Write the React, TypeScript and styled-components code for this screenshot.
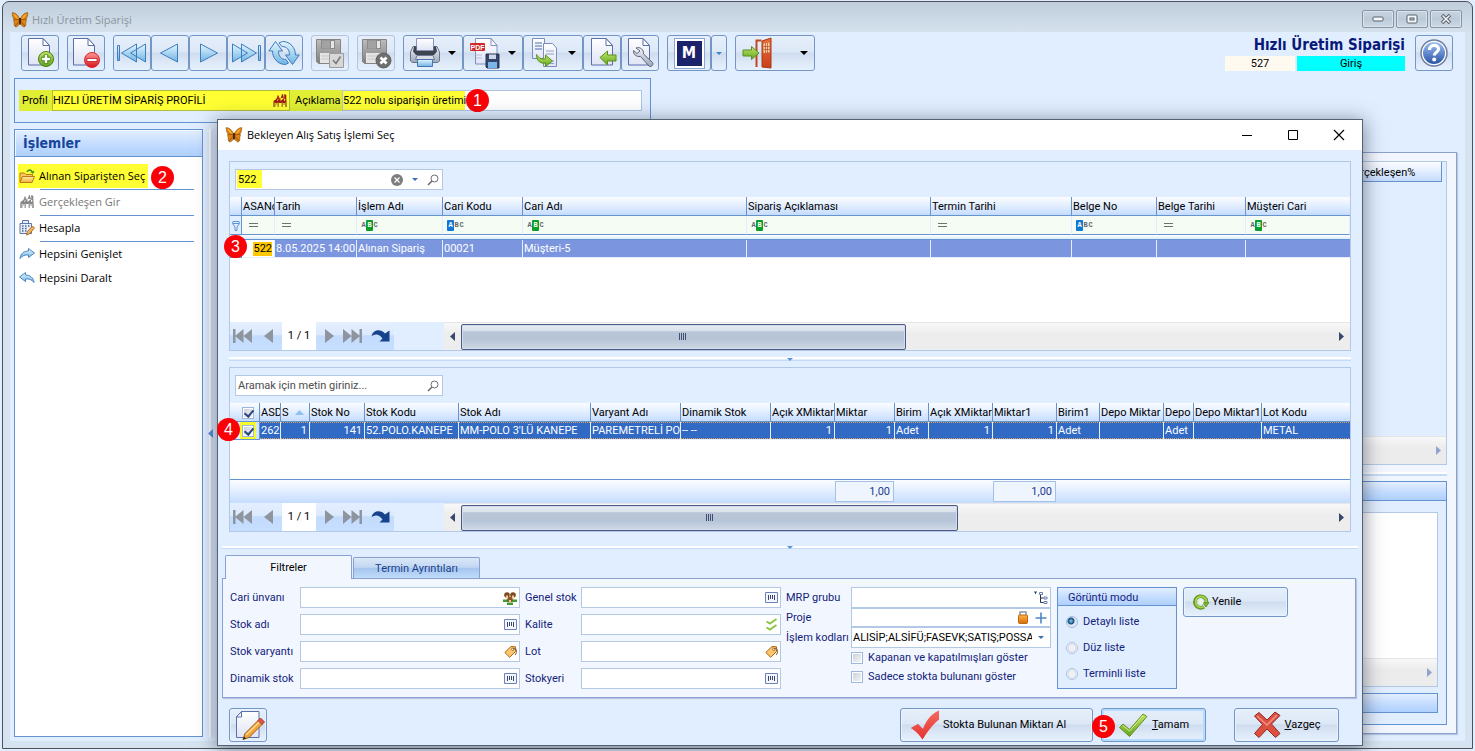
import React from 'react';
import styled, { createGlobalStyle, css } from 'styled-components';

const color = {
  page: '#e1eeff',
  frame: '#d6e3f0',
  line: '#6593cf',
  softLine: '#b3c8e4',
  navy: '#12227c',
  header: 'linear-gradient(#fbfdff, #e4efff 45%, #c5dcff)',
  group: 'linear-gradient(#e3efff, #c4dcff 55%, #aed0fd)',
  button: 'linear-gradient(#e6effb, #dde8f7 46%, #cedcef 50%, #dfeaf8 80%, #e6f1ff)',
};

const tahoma = "Roboto, 'DejaVu Sans Condensed', sans-serif";
const segoe = "'Open Sans', 'Noto Sans', sans-serif";
const heading = "'DejaVu Sans Condensed', 'DejaVu Sans', sans-serif";

const GlobalStyle = createGlobalStyle`
  * { box-sizing: border-box; }
  body { margin: 0; background: ${color.page}; font: 11px/14px ${tahoma}; color: #000; }
  button, input, select { font: inherit; color: inherit; margin: 0; }
  button { padding: 0; cursor: default; }
  svg { display: block; flex: none; overflow: visible; }
`;

/* ---------- window frame ---------- */

const Screen = styled.div`
  display: flex;
  min-height: 100vh;
  padding: 1px 2px 2px;
`;

const Frame = styled.div`
  position: relative;
  flex: 1;
  display: flex;
  flex-direction: column;
  min-width: 0;
  padding: 0 7px 7px;
  border: 1px solid #4d5256;
  border-radius: 7px 7px 0 0;
  background: linear-gradient(#bfcddb, #d5e2ee 30px, ${color.frame} 31px);
`;

const FrameTitle = styled.header`
  display: flex;
  align-items: center;
  gap: 4px;
  height: 30px;
  padding: 5px 3px 0 2px;
  color: #8b949e;
`;

const FrameTitleText = styled.h1`
  flex: 1;
  margin: 0;
  font: 11px/16px ${segoe};
`;

const FrameButtons = styled.div`
  display: flex;
  gap: 2px;
  padding-bottom: 1px;
`;

const FrameButton = styled.button`
  display: grid;
  place-items: center;
  width: 32px;
  height: 18px;
  border: 1px solid #8893a3;
  border-radius: 2px;
  background: linear-gradient(#c9d5e1, #bccad8 50%, #ccd9e5);
  box-shadow: inset 0 0 0 1px #d9e3ec;
`;

const Client = styled.main`
  flex: 1;
  display: flex;
  flex-direction: column;
  background: ${color.page};
`;

/* ---------- toolbar ---------- */

const Toolbar = styled.div`
  display: flex;
  gap: 8px;
  padding: 3px 12px 0 11px;
`;

const ToolGroup = styled.div`
  display: flex;
`;

const ToolButton = styled.button<{ $w?: number; $disabled?: boolean; $split?: boolean }>`
  display: flex;
  align-items: center;
  justify-content: ${(p) => (p.$split ? 'space-between' : 'center')};
  width: ${(p) => p.$w ?? 38}px;
  height: 36px;
  padding: ${(p) => (p.$split ? '0 6px 0 5px' : '0')};
  border: 1px solid ${(p) => (p.$disabled ? '#b3c4dc' : '#7396c6')};
  border-radius: 3px;
  background: ${color.button};
`;

const ToolSpacer = styled.span`
  flex: 1;
`;

const Mark = styled.span`
  display: grid;
  place-items: center;
  width: 31px;
  height: 31px;
  border: 1px solid #8aa6cf;
  background: #1b236b;
  box-shadow: inset 0 0 0 2px #fff;
  color: #fff;
  font: 700 16px/24px ${heading};
`;

const Summary = styled.div`
  display: flex;
  flex-direction: column;
  width: 180px;
  margin-right: 2px;
`;

const SummaryTitle = styled.h2`
  margin: 0;
  text-align: right;
  color: #08197a;
  font: 700 15px/21px ${heading};
`;

const SummaryRow = styled.div`
  display: grid;
  grid-template-columns: 70px 1fr;
  gap: 2px;
  text-align: center;
  line-height: 15px;
`;

const SummaryCell = styled.span<{ $bg: string }>`
  height: 15px;
  background: ${(p) => p.$bg};
  line-height: 16px;
`;

/* ---------- profile strip ---------- */

const ProfileBox = styled.section`
  position: relative;
  display: flex;
  align-items: flex-start;
  align-self: flex-start;
  width: 637px;
  height: 45px;
  margin: 7px 0 6px 4px;
  padding: 11px 4px;
  border: 1px solid ${color.line};
`;

const ProfileLabel = styled.label<{ $w: number }>`
  width: ${(p) => p.$w}px;
  padding-left: ${(p) => (p.$w > 40 ? 5 : 3)}px;
  background: #e0ef33;
  line-height: 21px;
`;

const ProfileField = styled.span<{ $w: number; $partial?: boolean }>`
  display: flex;
  align-items: center;
  width: ${(p) => p.$w}px;
  height: 21px;
  border: 1px solid ${(p) => (p.$partial ? '#aec4e2' : '#b0bd3f')};
  background: ${(p) =>
    p.$partial ? 'linear-gradient(to right, #ffff33 122px, #fff 122px)' : '#ffff33'};
`;

const BareInput = styled.input`
  flex: 1;
  width: 0;
  min-width: 0;
  height: 100%;
  padding: 0;
  border: 0;
  outline: 0;
  background: transparent;
  &::placeholder { color: #4d4d4d; opacity: 1; }
`;

const Badge = styled.span<{ $x: number; $y: number }>`
  position: absolute;
  left: ${(p) => p.$x}px;
  top: ${(p) => p.$y}px;
  z-index: 2;
  width: 23px;
  height: 23px;
  border-radius: 50%;
  background: #fb0007;
  color: #fff;
  text-align: center;
  font: 16px/23px 'Liberation Sans', sans-serif;
`;

/* ---------- workspace behind the dialog ---------- */

const Workspace = styled.div`
  flex: 1;
  display: flex;
  padding: 0 8px 4px 4px;
`;

const Sidebar = styled.aside`
  position: relative;
  width: 189px;
  border: 1px solid ${color.line};
  background: #fff;
`;

const SidebarTitle = styled.h2`
  margin: 0;
  height: 27px;
  padding-left: 8px;
  border-bottom: 1px solid ${color.line};
  background: ${color.group};
  box-shadow: inset 1px 1px 0 #f3f8ff;
  color: #17459c;
  font: 700 14px/26px ${heading};
`;

const ActionList = styled.ul`
  margin: 0;
  padding: 7px 8px 0 3px;
  list-style: none;
`;

const ActionItem = styled.li<{ $ruled?: boolean }>`
  display: flex;
  height: ${(p) => (p.$ruled ? 26 : 24)}px;
  ${(p) =>
    p.$ruled &&
    css`
      background: linear-gradient(${color.line}, ${color.line}) 22px 100% / 100% 1px no-repeat;
    `}
`;

const ActionButton = styled.button<{ $marked?: boolean; $muted?: boolean }>`
  display: flex;
  align-items: center;
  gap: 4px;
  height: 24px;
  padding: 0 3px 0 1px;
  border: 0;
  background: ${(p) => (p.$marked ? '#ffff33' : 'transparent')};
  color: ${(p) => (p.$muted ? '#777' : '#000')};
  font: 11px/16px ${segoe};
  white-space: nowrap;
`;

const SideSplitter = styled.div`
  display: flex;
  align-items: center;
  width: 16px;
  padding-left: 5px;
  background: linear-gradient(to right, transparent 6px, #fff 6px 7px, #cfe0f6 9px 10px, transparent 10px);
`;

const RightPane = styled.section`
  flex: 1;
  display: flex;
  flex-direction: column;
  justify-content: space-between;
  margin: 23px 0 3px;
  padding: 8px 9px 8px 8px;
  border: 1px solid #8ca0d0;
  background: #f2f7ff;
  box-shadow: 1px 1px 1px #b9c8e2;
`;

const BackGrid = styled.div`
  flex: 1;
  display: flex;
  flex-direction: column;
  justify-content: space-between;
  border: 1px solid ${color.softLine};
  background: ${color.page};
`;

const BackHeader = styled.div`
  display: flex;
  justify-content: flex-end;
  height: 20px;
  margin-right: 4px;
  border: solid ${color.line};
  border-width: 0 1px 1px 0;
  background: ${color.header};
  line-height: 21px;
`;

const BackHeaderCell = styled.span`
  width: 94px;
`;

const BackRule = styled.div`
  height: 16px;
  background: linear-gradient(transparent 7px, #fff 7px 9px, #c5dcf8 9px 11px, transparent 11px);
`;

const BackGroup = styled.div`
  flex: none;
  display: flex;
  flex-direction: column;
  height: 244px;
  border: 1px solid ${color.line};
  background: ${color.page};
`;

const BackGroupTitle = styled.div`
  height: 19px;
  border-bottom: 1px solid ${color.line};
  background: ${color.group};
`;

const BackList = styled.div`
  flex: 1;
  display: flex;
  flex-direction: column;
  justify-content: flex-end;
  margin: 11px 8px 6px;
  border: 1px solid ${color.softLine};
  background: #fff;
`;

const BackFooter = styled.div`
  height: 20px;
  margin: 0 8px 11px;
  border: 1px solid ${color.line};
  background: ${color.group};
`;

const BackScroll = styled.div`
  display: flex;
  align-items: center;
  justify-content: flex-end;
  height: 28px;
  padding-right: 5px;
  border-top: 1px solid #e4e4e4;
  background: linear-gradient(#f8f8f8, #ececec 40%);
`;

/* ---------- dialog ---------- */

const Dialog = styled.section`
  position: absolute;
  top: 117px;
  left: 214px;
  right: 109px;
  z-index: 5;
  display: flex;
  flex-direction: column;
  border: 1px solid #56636f;
  background: ${color.page};
  box-shadow: 0 3px 18px 1px rgba(20, 30, 50, 0.5);
`;

const DialogTitle = styled.header`
  display: flex;
  align-items: center;
  height: 30px;
  margin-bottom: 11px;
  padding-left: 8px;
  background: #fff;
`;

const DialogTitleText = styled.h2`
  flex: 1;
  margin: 0;
  padding-left: 5px;
  font: 11px/16px ${segoe};
`;

const CaptionButton = styled.button`
  display: grid;
  place-items: center;
  width: 46px;
  height: 30px;
  border: 0;
  background: transparent;
`;

const GridPanel = styled.section`
  position: relative;
  margin: 0 11px;
  border: 1px solid ${color.softLine};
  background: ${color.page};
`;

const SearchField = styled.div<{ $marked?: boolean }>`
  display: flex;
  align-items: center;
  width: 208px;
  height: 21px;
  margin: 7px 5px;
  padding-left: 2px;
  border: 1px solid ${color.softLine};
  background: #fff;
  ${(p) =>
    p.$marked &&
    css`
      background: linear-gradient(#ffff33, #ffff33) 1px 0 / 25px 18px no-repeat #fff;
    `}
`;

const GlyphButton = styled.button`
  display: grid;
  place-items: center;
  width: 18px;
  height: 18px;
  border: 0;
  background: transparent;
`;

const Table = styled.table`
  width: 100%;
  table-layout: fixed;
  border-collapse: separate;
  border-spacing: 0;
  background: #fff;
`;

const Head = styled.th`
  height: 19px;
  padding: 1px 1px 0;
  border: solid ${color.line};
  border-width: 0 1px 1px 0;
  background: ${color.header};
  font-weight: 400;
  line-height: 17px;
  text-align: left;
  white-space: nowrap;
  overflow: hidden;
  &:last-child { border-right: 0; }
`;

const FilterCell = styled.td`
  height: 19px;
  padding: 0 4px;
  border: solid #e1ecff;
  border-width: 0 1px 0 0;
  border-bottom: 1px solid ${color.line};
  background: #f4fcf4;
  &:first-child { padding: 2px 2px 0; background: ${color.page}; border-right-color: ${color.line}; }
`;

const BandCell = styled.td`
  height: 5px;
  padding: 0;
  border-bottom: 1px solid ${color.line};
  background: linear-gradient(#fff, #dcebff);
`;

const focusDots = 'linear-gradient(to right, #e0a050 50%, #316ac5 50%)';

const Cell = styled.td<{ $tone: 'light' | 'strong' | 'plain'; $right?: boolean }>`
  height: 18px;
  padding: 1px 2px 0 1px;
  border: solid #e6efff;
  border-width: 0 1px 1px 0;
  line-height: 16px;
  text-align: ${(p) => (p.$right ? 'right' : 'left')};
  white-space: nowrap;
  overflow: hidden;
  ${(p) =>
    p.$tone === 'light' &&
    css`
      color: #fff;
      background: #7b96df;
    `}
  ${(p) =>
    p.$tone === 'strong' &&
    css`
      color: #fff;
      background:
        ${focusDots} 0 0 / 2px 1px repeat-x,
        ${focusDots} 0 100% / 2px 1px repeat-x,
        #316ac5;
      background-clip: padding-box;
    `}
  &:last-child { border-right: 0; }
`;

const MarkerCell = styled.td`
  height: 18px;
  padding: 0;
  border: solid ${color.line};
  border-width: 0 1px 1px 0;
  background: linear-gradient(to right, #f6faff, #cfe2ff);
`;

const CheckSpot = styled.span<{ $marked?: boolean }>`
  display: grid;
  place-items: center;
  width: 16px;
  height: 17px;
  margin-left: ${(p) => (p.$marked ? 10 : 9)}px;
  background: ${(p) => (p.$marked ? '#f5fb2e' : 'transparent')};
`;

const Hit = styled.mark`
  display: inline-block;
  height: 14px;
  background: #ffc800;
  line-height: 14px;
`;

const EmptyCell = styled.td<{ $h: number }>`
  height: ${(p) => p.$h}px;
  padding: 0;
`;

const FootCell = styled.td`
  height: 24px;
  padding: 1px 1px 1px 0;
  border-top: 1px solid ${color.line};
  background: ${color.header};
`;

const Total = styled.output`
  display: block;
  height: 21px;
  padding-right: 3px;
  border: 1px solid #a5c2e6;
  background: #eef5ff;
  color: #1d3c8f;
  line-height: 20px;
  text-align: right;
`;

const SortLabel = styled.span`
  display: flex;
  align-items: center;
  gap: 6px;
`;

const ABC = styled.span<{ $mode: 'contains' | 'starts' }>`
  display: flex;
  align-items: center;
  width: 17px;
  color: #666;
  font: 700 7px/11px 'Liberation Mono', monospace;
  text-align: center;
  span { flex: 1; }
  span:nth-child(${(p) => (p.$mode === 'contains' ? 2 : 1)}) {
    flex: 0 0 7px;
    border-radius: 1px;
    background: ${(p) => (p.$mode === 'contains' ? '#0a9e28' : '#0f78d4')};
    color: #fff;
  }
`;

/* ---------- record navigator + scroll bar ---------- */

const NavBar = styled.div`
  display: flex;
  height: 28px;
`;

const NavButtons = styled.div<{ $back?: boolean }>`
  display: flex;
  align-items: center;
  justify-content: space-between;
  width: ${(p) => (p.$back ? 52 : 78)}px;
  padding: ${(p) => (p.$back ? '0 9px 0 3px' : '0 3px 0 9px')};
  background: linear-gradient(#e4efff, #dceaff 44%, #c3dbfc 50%, #c6deff);
`;

const NavButton = styled.button`
  border: 0;
  background: transparent;
`;

const NavCount = styled.span`
  width: 34px;
  background: #fff;
  line-height: 28px;
  text-align: center;
`;

const ScrollBar = styled.div`
  flex: 1;
  display: flex;
  align-items: center;
  margin-left: 50px;
  border-top: 1px solid #e6e6e6;
  background: linear-gradient(#f8f8f8, #ededed 40%);
`;

const ScrollArrow = styled.button`
  display: grid;
  place-items: center;
  width: 17px;
  height: 26px;
  border: 0;
  background: transparent;
`;

const Track = styled.div`
  flex: 1;
`;

const Thumb = styled.div<{ $size: number }>`
  display: grid;
  place-items: center;
  width: ${(p) => p.$size}%;
  height: 26px;
  border: 1px solid #4b5b86;
  border-radius: 2px;
  background: linear-gradient(#e6ebf1, #dae2eb 24%, #b9c6d8 28%, #b6c4d7 60%, #cfd9e6);
  box-shadow: inset 0 0 0 1px #d3dce8;
`;

const Splitter = styled.div<{ $wide?: boolean }>`
  display: flex;
  justify-content: center;
  align-items: center;
  height: ${(p) => (p.$wide ? 23 : 16)}px;
  margin: ${(p) => (p.$wide ? '0 4px' : '0 11px')};
  padding-top: ${(p) => (p.$wide ? 7 : 0)}px;
  background: ${(p) =>
    p.$wide
      ? 'linear-gradient(transparent 14px, #fff 14px 16px, #c5dcf8 16px 17px, transparent 17px)'
      : 'linear-gradient(transparent 6px, #fff 6px 8px, #c5dcf8 9px 10px, transparent 10px)'};
`;

/* ---------- filter tabs ---------- */

const Tabs = styled.div`
  display: flex;
  align-items: flex-end;
  gap: 1px;
  padding: 0 7px;
`;

const Tab = styled.button<{ $active?: boolean }>`
  z-index: ${(p) => (p.$active ? 1 : 0)};
  width: 127px;
  height: ${(p) => (p.$active ? 24 : 21)}px;
  margin-bottom: ${(p) => (p.$active ? -1 : 0)}px;
  padding-top: 1px;
  border: 1px solid #8ca0d0;
  border-bottom: 0;
  border-radius: 2px 2px 0 0;
  background: ${(p) =>
    p.$active ? '#f2f7ff' : 'linear-gradient(#dbe8f8, #c2d7f2 46%, #a7c6ee 52%, #c0dcfb)'};
  color: ${(p) => (p.$active ? '#000' : '#1b3f8c')};
  line-height: 18px;
`;

const TabPanel = styled.div`
  display: flex;
  align-items: flex-start;
  gap: 6px;
  margin: 0 6px 0 4px;
  padding: 8px 7px;
  border: 1px solid #8ca0d0;
  background: #f2f7ff;
  box-shadow: 1px 1px 1px #b5c4df;
  color: ${color.navy};
`;

const FieldColumns = styled.div`
  display: flex;
  align-items: flex-start;
  gap: 5px;
`;

const Fields = styled.div<{ $label: number; $input: number; $tight?: boolean }>`
  display: grid;
  grid-template-columns: ${(p) => p.$label}px ${(p) => p.$input}px;
  align-items: center;
  row-gap: ${(p) => (p.$tight ? 0 : 6)}px;
`;

const FieldLabel = styled.label`
  line-height: 19px;
  white-space: nowrap;
`;

const Field = styled.span<{ $flat?: boolean }>`
  display: flex;
  align-items: center;
  height: ${(p) => (p.$flat ? 19 : 21)}px;
  border: 1px solid ${color.softLine};
  background: #fff;
  color: #000;
`;

const CodeSelect = styled.select`
  flex: 1;
  min-width: 0;
  height: 19px;
  padding: 0 0 0 1px;
  border: 0;
  outline: 0;
  appearance: none;
  background: transparent;
`;

const Checks = styled.div`
  display: flex;
  flex-direction: column;
  grid-column: 2;
`;

const CheckLabel = styled.label`
  display: flex;
  align-items: center;
  gap: 5px;
  height: 19px;
  white-space: nowrap;
`;

const CheckBox = styled.input.attrs({ type: 'checkbox' })`
  position: relative;
  flex: none;
  appearance: none;
  width: 12px;
  height: 12px;
  border: 1px solid #9db8da;
  background: linear-gradient(135deg, #c9cfd8, #f7f8fa);
  box-shadow: inset 0 0 0 1px #fff;
  &:checked::after {
    content: '';
    position: absolute;
    left: 3px;
    top: 0;
    width: 4px;
    height: 7px;
    border: solid #2d4680;
    border-width: 0 2px 2px 0;
    transform: rotate(40deg);
  }
`;

const ModeGroup = styled.fieldset`
  width: 120px;
  height: 102px;
  min-width: 0;
  margin: 0;
  padding: 0;
  border: 1px solid ${color.line};
  background: ${color.page};
`;

const ModeTitle = styled.legend`
  float: left;
  width: 100%;
  height: 18px;
  padding: 0 10px;
  border-bottom: 1px solid ${color.line};
  background: ${color.group};
  line-height: 19px;
`;

const ModeList = styled.div`
  clear: both;
  padding: 3px 0 0 8px;
`;

const ModeLabel = styled.label`
  display: flex;
  align-items: center;
  gap: 5px;
  height: 26px;
`;

const Radio = styled.input.attrs({ type: 'radio' })`
  appearance: none;
  width: 12px;
  height: 12px;
  border: 1px solid #a9c0de;
  border-radius: 50%;
  background: radial-gradient(circle, #eef1f5 3px, #d3dae4 4px, #fff 5px);
  &:checked {
    border-color: #9dbadb;
    background: radial-gradient(circle at 4px 4px, #7fd0ee 0, #174a7c 3px, #dfeaf5 4px);
  }
`;

const PushButton = styled.button<{ $w: number; $h: number; $default?: boolean }>`
  position: relative;
  display: flex;
  align-items: center;
  justify-content: center;
  gap: 4px;
  width: ${(p) => p.$w}px;
  height: ${(p) => p.$h}px;
  border: 1px solid #7396c6;
  border-radius: 3px;
  background: ${color.button};
  box-shadow: ${(p) => (p.$default ? 'inset 0 0 0 2px #b5dcff' : 'inset 0 0 0 1px #eaf2fd')};
  color: #000;
`;

const LeadButton = styled(PushButton)`
  justify-content: flex-start;
  padding-left: 9px;
  gap: 3px;
`;

const DialogFooter = styled.footer`
  display: flex;
  gap: 8px;
  padding: 10px 23px 3px 11px;
`;

const Gap = styled.span<{ $w?: number }>`
  ${(p) => (p.$w ? `width: ${p.$w}px;` : 'flex: 1;')}
`;

/* ---------- drawings ---------- */

const DefsSheet = styled.svg`
  position: absolute;
`;

const Gradients = () => (
  <DefsSheet width="0" height="0" aria-hidden="true">
    <defs>
      {[
        ['paper', '#ffffff', '#dfe4f5'],
        ['green', '#c4e66a', '#5fa51e'],
        ['red', '#ff9a94', '#d8131c'],
        ['sky', '#e3f6ff', '#6fb4e3'],
        ['blue', '#9cc0f2', '#2a55a8'],
        ['grey', '#bdbdbd', '#7e7e7e'],
        ['steel', '#f2f4f8', '#9ba6b8'],
        ['orange', '#ffb545', '#d96a0c'],
        ['door', '#ee6a3a', '#c8401a'],
        ['folder', '#ffe9a0', '#f0b23a'],
      ].map(([id, a, b]) => (
        <linearGradient key={id} id={id} x1="0" y1="0" x2="0" y2="1">
          <stop offset="0" stopColor={a} />
          <stop offset="1" stopColor={b} />
        </linearGradient>
      ))}
    </defs>
  </DefsSheet>
);

const Icon = ({ s = 32, box = 32, children }: { s?: number; box?: number; children: React.ReactNode }) => (
  <svg width={s} height={s} viewBox={`0 0 ${box} ${box}`} fill="none" aria-hidden="true">
    {children}
  </svg>
);

const Wing = () => (
  <g>
    <path d="M8 7.500C6 3 3.500.8.3.6.1 3 .8 5.500 2 7 1.300 8 1.600 9.300 2.300 10 1.800 12 2.300 14.500 3.800 15c2.200-.2 3.700-3 4.200-6z" fill="#e2820f" stroke="#8a4a08" strokeWidth=".6" />
    <path d="M1.500 1.800C3.500 2.500 5.200 4.500 6 7 4.500 6.300 2.500 5 1.500 1.800z" fill="#ffb53a" />
    <path d="M2 7c2 .5 3.500.5 5.500 1M3 14c1-1 3-3.500 4.500-5" stroke="#7a3f06" strokeWidth=".7" />
  </g>
);

const Butterfly = () => (
  <Icon s={16} box={16}>
    <Wing />
    <g transform="translate(16 0) scale(-1 1)"><Wing /></g>
    <path d="M8 6v6.500" stroke="#3a2410" strokeWidth="1.800" />
  </Icon>
);

const Page = ({ x = 4, y = 1 }: { x?: number; y?: number }) => (
  <g transform={`translate(${x} ${y})`}>
    <path d="M.5.5h14.500l6.500 7v19.500H.5z" fill="url(#paper)" stroke="#5a6ea8" />
    <path d="M15 .5v7h6.500z" fill="#fff" stroke="#5a6ea8" strokeLinejoin="round" />
  </g>
);

const PageAdd = () => (
  <Icon>
    <Page />
    <circle cx="22" cy="22" r="7.500" fill="url(#green)" stroke="#4a7d17" />
    <path d="M22 17.500v9M17.500 22h9" stroke="#3f7a12" strokeWidth="4.500" />
    <path d="M22 18v8M18 22h8" stroke="#fff" strokeWidth="2.500" />
  </Icon>
);

const PageRemove = () => (
  <Icon>
    <Page x={3} />
    <circle cx="22" cy="23" r="7.500" fill="url(#red)" stroke="#e0262d" />
    <path d="M17 21.500h10v3H17z" fill="#fff" stroke="#b01018" strokeWidth=".7" />
  </Icon>
);

const skyStroke = { fill: 'url(#sky)', stroke: '#3d7cbd', strokeWidth: 1, strokeLinejoin: 'round' as const };

const First = ({ flip }: { flip?: boolean }) => (
  <Icon>
    <g transform={flip ? 'translate(32 0) scale(-1 1)' : undefined}>
      <path d="M1.500 8.500h2v15h-2z" {...skyStroke} />
      <path d="M20.500 7v18L5.500 16zM29.500 7v18l-15-9z" {...skyStroke} />
    </g>
  </Icon>
);

const Prev = ({ flip }: { flip?: boolean }) => (
  <Icon>
    <path d={flip ? 'M8.500 7v18l17-9z' : 'M23.500 7v18l-17-9z'} {...skyStroke} />
  </Icon>
);

const Reload = () => (
  <Icon>
    <path d="M7.500 4.500.8 14h3.700C4.500 21 9.500 27.500 17.500 27.500l3-1.500-2.500-3.500C13 22.500 10.500 19 10.500 14h4z" {...skyStroke} />
    <path d="M24.500 27.500 31.200 18h-3.700C27.500 11 22.500 4.500 14.500 4.500L11 6l3 3.500C19 9.500 21.500 13 21.500 18h-4z" {...skyStroke} />
  </Icon>
);

const Floppy = () => (
  <g>
    <path d="M2.500 2.500h24v24h-22l-2-2z" fill="url(#grey)" stroke="#858585" />
    <path d="M7 3h14v9H7z" fill="#8b8b8b" />
    <path d="M8 3.500h8v8H8z" fill="#a2a2a2" />
    <path d="M17 4h3v7h-3z" fill="#e6e6e6" />
    <path d="M6 16h17v10H6z" fill="#e4e4e4" />
    <path d="M7.500 19h14M7.500 22h14" stroke="#c6c6c6" />
  </g>
);

const SaveCheck = () => (
  <Icon>
    <Floppy />
    <path d="M15.500 16.500h14v14h-14z" fill="#d7d7d7" stroke="#9c9c9c" />
    <path d="m19 23 3 3.500 4.500-7" stroke="#777" strokeWidth="1.500" />
  </Icon>
);

const SaveCancel = () => (
  <Icon>
    <Floppy />
    <circle cx="23.500" cy="23.500" r="7.500" fill="#6f6f6f" stroke="#5f5f5f" />
    <path d="m20.500 20.500 6 6m0-6-6 6" stroke="#fff" strokeWidth="2.800" />
  </Icon>
);

const Printer = () => (
  <Icon>
    <path d="M7.500 1.500h17v12h-17z" fill="url(#paper)" stroke="#8a93b5" />
    <path d="M4 9.500h3.500v5h17v-5H28l2.500 5.500v9l-2 1.500h-25L1.500 24v-9z" fill="url(#steel)" stroke="#66708f" />
    <path d="M5 9.500h2v4.500h18V9.500h2l1 5-3 3.500H7l-3-3.500z" fill="#3e4350" />
    <path d="M8 18.500h16l1.500 4H6.500z" fill="#d8dde6" stroke="#6d7896" />
    <path d="M8.500 22.500h15v7h-15z" fill="url(#sky)" stroke="#4b73ad" />
  </Icon>
);

const PdfSave = () => (
  <Icon>
    <path d="M6.500 1.500h15.500l6 7v18.500H6.500z" fill="url(#paper)" stroke="#8290bd" />
    <path d="M22 1.500v7h6z" fill="#fff" stroke="#8290bd" />
    <rect x="1" y="6" width="15" height="8" rx="1" fill="#cf2a27" />
    <text x="8.500" y="12.500" fontSize="7" fontWeight="700" fill="#fff" textAnchor="middle" fontFamily="Liberation Sans, sans-serif">PDF</text>
    <path d="M7 18h6M7 21h6" stroke="#b8c0da" />
    <path d="M17 17h13v14H18l-1-1z" fill="#33456b" stroke="#26334f" />
    <path d="M20 17.500h7v4.500h-7z" fill="#cfd8ea" />
    <path d="M19 25h9v6h-9z" fill="#79b7e8" />
  </Icon>
);

const PageTransfer = () => (
  <Icon>
    <path d="M3.500 1.500h12v20h-12z" fill="url(#paper)" stroke="#7d8cba" />
    <path d="M6 6h7M6 9h7M6 12h7" stroke="#4d6bb0" />
    <path d="M14.500 6.500h9l4 4.500v18.500h-13z" fill="url(#paper)" stroke="#7d8cba" />
    <path d="M17 14h8M17 17h8M17 24h8M17 26.500h8" stroke="#8f9ecb" />
    <path d="M7.500 17.500c2 4 6 5 9 4V18l7 6-7 5.500V26c-5 1-9-2-9-8.500z" fill="url(#green)" stroke="#5b8f1e" />
  </Icon>
);

const PageImport = () => (
  <Icon>
    <Page x={5} />
    <path d="M14 20.500 21.500 14v4H30v6h-8.500v4z" fill="url(#green)" stroke="#5b8f1e" />
  </Icon>
);

const PageTools = () => (
  <Icon>
    <Page x={4} />
    <path d="M12 11c4-1.500 8 1.500 7.500 6l9 8.500c1.500 2-1 5-3.500 3.500l-8.500-9.500C12 20 9 17 9.500 13.500l3.500 3 3-2.500z" fill="url(#steel)" stroke="#5a6478" />
  </Icon>
);

const ExitDoor = () => (
  <Icon>
    <path d="M15.500 30V3.500h5" stroke="#c2481f" strokeWidth="2" />
    <path d="M21 4 30 1v30l-9-1z" fill="url(#door)" stroke="#a53b15" />
    <path d="M22.500 6.500 28.500 5.500v10l-6 .5z" fill="#f6cfa5" />
    <path d="M24.500 6v10M26.500 6v10M22.500 9.500h6M22.500 12.500h6" stroke="#b5491e" strokeWidth=".7" />
    <path d="M2 13h8.500V9.500L18 16l-7.500 6.500V19H2z" fill="url(#green)" stroke="#5b8f1e" />
  </Icon>
);

const Help = () => (
  <Icon>
    <circle cx="16" cy="16" r="13" fill="#fff" stroke="#6d7e9e" strokeWidth="1.500" />
    <circle cx="16" cy="16" r="11" fill="url(#blue)" />
    <path d="M11.500 13c0-6 9-6 9-1 0 3.500-4 3-4.200 6.500" stroke="#fff" strokeWidth="3.200" />
    <circle cx="16.200" cy="22.500" r="2" fill="#fff" />
  </Icon>
);

const Caret = ({ w = 8, c = '#000' }: { w?: number; c?: string }) => (
  <svg width={w} height={w / 2} viewBox="0 0 8 4" aria-hidden="true">
    <path d="M0 0h8L4 4z" fill={c} />
  </svg>
);

const Factory = ({ dark, light }: { dark: string; light: string }) => (
  <Icon s={16} box={16}>
    <path d="M4.500 7 6 2.500 7.500 6M9 5l1.500-4 1 4M12.500 6V1.500l1.500.5V7" fill={dark} stroke={dark} strokeWidth=".6" />
    <path d="M1.500 10V8L5 5.500V8l3.500-3v3L12 5v3l2.500-1.500V10z" fill={dark} />
    <path d="M1 9.500h2.500V14H1zM5.500 9.500H7V14H5.500zM9.500 9.500H11V14H9.500zM13 9.500h2V14h-2z" fill={light} />
    <path d="M3.500 10h2v2h-2zM11 10h2v2h-2z" fill={light} opacity=".6" />
  </Icon>
);

const FolderOpen = () => (
  <Icon s={16} box={16}>
    <path d="M1 14V5h4.500L7 6.500h6.500V9" fill="#f6c75a" stroke="#b97a17" />
    <path d="M1 14.500 3.500 8.500h12l-2.500 6z" fill="url(#folder)" stroke="#b97a17" />
    <path d="M8 4C9 1.500 12 1.500 13 3.500" stroke="#3f8f2b" strokeWidth="1.500" />
    <path d="m11 3.500 4.500-.5L14 6z" fill="#3f8f2b" />
  </Icon>
);

const Calculator = () => (
  <Icon s={16} box={16}>
    <path d="M3.500.5h6v3h-6zM1 3.500h11.500v10H1z" fill="#e9eef8" stroke="#5d75a8" />
    <path d="M3 6h1.500M6 6h1.500M9 6h1.500M3 8.500h1.500M6 8.500h1.500M3 11h1.500M6 11h1.500" stroke="#43609c" strokeWidth="1.500" />
    <path d="m7.500 15 1-3.500L13.500 6l2 2-5 6z" fill="#f3b35a" stroke="#99601d" strokeWidth=".8" />
  </Icon>
);

const BendArrow = ({ flip }: { flip?: boolean }) => (
  <Icon s={16} box={16}>
    <path
      transform={flip ? 'translate(16 0) scale(-1 1)' : undefined}
      d="M1 12.500C1.500 7.500 5 5 9.500 5V2.500L15.500 7 9.500 11.500V9C6 8.500 3.500 9.500 1 12.500z"
      {...skyStroke}
      strokeWidth=".9"
    />
  </Icon>
);

const Clear = () => (
  <Icon s={12} box={12}>
    <circle cx="6" cy="6" r="6" fill="#7d7d7d" />
    <path d="m3.500 3.500 5 5m0-5-5 5" stroke="#fff" strokeWidth="1.200" />
  </Icon>
);

const Magnifier = () => (
  <Icon s={12} box={12}>
    <circle cx="7.500" cy="4.500" r="3.500" stroke="#6d6d6d" />
    <path d="M5 7 1 11" stroke="#6d6d6d" strokeWidth="1.600" />
  </Icon>
);

const Funnel = () => (
  <svg width="8" height="10" viewBox="0 0 8 10" fill="none" aria-label="Filtre">
    <path d="M.5 2.500 1 .5h6l.5 2L5 6v3.500H3V6zM1 2.500h6" stroke="#5b94dc" />
  </svg>
);

const EqualSign = () => (
  <svg width="17" height="6" viewBox="0 0 17 6" fill="none" aria-label="Eşittir">
    <path d="M3 1.500h9M3 4.500h9" stroke="#707070" />
  </svg>
);

const Barcode = () => (
  <svg width="13" height="11" viewBox="0 0 13 11" fill="none" aria-hidden="true">
    <path d="M.5.500h12v10H.5z" fill="#f3f6fd" stroke="#6c82ba" />
    <path d="M3.500 3v5M5.500 3v4M7.500 3v4M9.500 3v5" stroke="#3c4668" />
  </svg>
);

const People = () => (
  <Icon s={14} box={14}>
    <path d="M0 8.500h6V11H0zM8 8.500h6V11H8zM4 11.500h6V14H4z" fill="#3d9a35" />
    <circle cx="4" cy="4" r="2.800" fill="#7c4a1e" />
    <circle cx="10" cy="4" r="2.800" fill="#7c4a1e" />
    <circle cx="7" cy="8.500" r="2.800" fill="#8b5524" />
    <path d="M3 4.500h2v3H3zM9 4.500h2v3H9zM6 9h2v2.500H6z" fill="#f0c896" />
  </Icon>
);

const TagIcon = () => (
  <Icon s={13} box={13}>
    <path d="M.8 7.500 7 1.500l4.500.3.2 4.500-6 6z" fill="#ffc56b" stroke="#a8691c" />
    <circle cx="8.800" cy="4.300" r="1.200" fill="#fff" stroke="#7b4c12" strokeWidth=".7" />
    <path d="M9 4c4-2 4.500 4 2 6" stroke="#6b4a26" strokeWidth=".9" />
  </Icon>
);

const DoubleCheck = () => (
  <Icon s={13} box={13}>
    <path d="m1.500 3.500 3.500 2L11.500 1M1.500 9.500l3.500 2 6.500-4.500" stroke="#8cc540" strokeWidth="2" />
  </Icon>
);

const TreeIcon = () => (
  <Icon s={14} box={14}>
    <path d="M0 1h3M1.500 1v2" stroke="#39466e" />
    <path d="M5.500 1.500h3v2h-3zM10 6h3v2h-3zM10 10.500h3v2h-3z" fill="#fff" stroke="#6c7fb2" />
    <path d="M6.500 4v7.500h3M6.500 7h3" stroke="#27324f" />
  </Icon>
);

const LockIcon = () => (
  <svg width="10" height="13" viewBox="0 0 10 13" fill="none" aria-hidden="true">
    <path d="M2 5V1h6v4" stroke="#8a94a6" strokeWidth="1.500" />
    <rect x=".5" y="4" width="9" height="8.500" rx="1" fill="url(#orange)" stroke="#b96c10" />
  </svg>
);

const PlusIcon = () => (
  <Icon s={12} box={12}>
    <path d="M6 .5v11M.5 6h11" stroke="#4b86c4" strokeWidth="1.600" />
  </Icon>
);

const Regenerate = () => (
  <Icon s={16} box={16}>
    <path d="M11 12.800A5.800 5.800 0 1 1 13.500 8" stroke="#5d9420" strokeWidth="3.600" />
    <path d="M11 12.500A5.500 5.500 0 1 1 13.500 8" stroke="#a5d14d" strokeWidth="2" />
    <path d="M9.500 8.500h6.500L13 13z" fill="#7cb52d" stroke="#4e8518" strokeWidth=".7" />
    <circle cx="8" cy="8" r="2.500" fill="#eef6e0" />
  </Icon>
);

const RedCheck = () => (
  <Icon s={30} box={30}>
    <path d="M1 18 8 14l5 5C16 11 21 4 29 .5v9C23 14 17 22 12.500 29.500 10 25 5 20.500 1 18z" fill="url(#red)" />
    <path d="M1 18 8 14l5 5C16 11 21 4 29 .5v9C23 14 17 22 12.500 29.500 10 25 5 20.500 1 18z" fill="#ec4a3c" opacity=".6" />
  </Icon>
);

const GreenCheck = () => (
  <Icon s={30} box={30}>
    <path d="M1.500 17.500 5 14l6.500 5.500L25 4l4 2.500L11.500 26.500z" fill="url(#green)" stroke="#6b8f1d" />
    <path d="M5 15.500 11.500 21 25 5.500" stroke="#d8f08c" strokeWidth="1" />
  </Icon>
);

const RedCross = () => (
  <Icon s={28} box={28}>
    <path d="M1.500 5 6 1.500 14 9l8-8L27 4.500 18.500 13 27 22.500 22.500 26.500 14 18 6 26.500 1.500 22.500 9.500 13.500z" fill="#dd4f3e" stroke="#8e2b22" />
    <path d="M4 5 14 14 24 4" stroke="#f0938a" strokeWidth="1.500" />
  </Icon>
);

const PageEdit = () => (
  <Icon>
    <path d="M9.500 2.500h17.500v26H4.500V8z" fill="url(#paper)" stroke="#5a6ea8" strokeLinejoin="round" />
    <path d="M9.500 2.500V8h-5z" fill="#fff" stroke="#5a6ea8" strokeLinejoin="round" />
    <path d="M11 30.500l2-6L26.500 11l4 4L17 28.500z" fill="#f2a33c" stroke="#9c5d14" />
    <path d="M14 26 28 12.500" stroke="#ffd98f" strokeWidth="1.500" />
    <path d="m26 11.500 2.500-2.500 4 4-2.500 2.500z" fill="#e0564c" stroke="#a93932" />
    <path d="m11 30.500 1-3 2 2z" fill="#222" />
  </Icon>
);

const NavEnd = ({ flip }: { flip?: boolean }) => (
  <svg width="19" height="14" viewBox="0 0 19 14" aria-hidden="true">
    <path
      transform={flip ? 'translate(19 0) scale(-1 1)' : undefined}
      d="M0 0h2.500v14H0zM10.500 0v14L2 7zM19 0v14l-8.500-7z"
      fill="#8e959e"
    />
  </svg>
);

const NavStep = ({ flip }: { flip?: boolean }) => (
  <svg width="9" height="14" viewBox="0 0 9 14" aria-hidden="true">
    <path d={flip ? 'M0 0v14l9-7z' : 'M9 0v14L0 7z'} fill="#8e959e" />
  </svg>
);

const NavRedo = () => (
  <svg width="20" height="14" viewBox="0 0 20 14" aria-hidden="true">
    <path d="M.5 7C2 .5 9.500-.5 14 4.500l4.500-3V12.500H8.500L11.500 9.500C8.500 5 4.500 4.500.5 7z" fill="#17438c" />
  </svg>
);

const SideArrow = ({ flip, c = '#39476e' }: { flip?: boolean; c?: string }) => (
  <svg width="5" height="9" viewBox="0 0 5 9" aria-hidden="true">
    <path d={flip ? 'M0 0v9l5-4.500z' : 'M5 0v9L0 4.500z'} fill={c} />
  </svg>
);

const Grip = () => (
  <svg width="8" height="7" viewBox="0 0 8 7" aria-hidden="true">
    <path d="M.5 0v7M2.500 0v7M4.500 0v7M6.500 0v7" stroke="#3f4d72" />
  </svg>
);

/* ---------- composed parts ---------- */

const RecordBar = ({ thumb }: { thumb: number }) => (
  <NavBar>
    <NavButtons $back>
      <NavButton aria-label="İlk kayıt"><NavEnd /></NavButton>
      <NavButton aria-label="Önceki kayıt"><NavStep /></NavButton>
    </NavButtons>
    <NavCount>1 / 1</NavCount>
    <NavButtons>
      <NavButton aria-label="Sonraki kayıt"><NavStep flip /></NavButton>
      <NavButton aria-label="Son kayıt"><NavEnd flip /></NavButton>
      <NavButton aria-label="Yenile"><NavRedo /></NavButton>
    </NavButtons>
    <ScrollBar>
      <ScrollArrow aria-label="Sola kaydır"><SideArrow /></ScrollArrow>
      <Track><Thumb $size={thumb}><Grip /></Thumb></Track>
      <ScrollArrow aria-label="Sağa kaydır"><SideArrow flip /></ScrollArrow>
    </ScrollBar>
  </NavBar>
);

type OrderColumn = { title: string; w?: number; filter: 'eq' | 'contains' | 'starts'; value: string };

const orderColumns: OrderColumn[] = [
  { title: 'ASANo', w: 33, filter: 'eq', value: '522' },
  { title: 'Tarih', w: 82, filter: 'eq', value: '8.05.2025 14:00' },
  { title: 'İşlem Adı', w: 86, filter: 'contains', value: 'Alınan Sipariş' },
  { title: 'Cari Kodu', w: 80, filter: 'starts', value: '00021' },
  { title: 'Cari Adı', w: 224, filter: 'contains', value: 'Müşteri-5' },
  { title: 'Sipariş Açıklaması', w: 184, filter: 'contains', value: '' },
  { title: 'Termin Tarihi', w: 141, filter: 'eq', value: '' },
  { title: 'Belge No', w: 85, filter: 'starts', value: '' },
  { title: 'Belge Tarihi', w: 89, filter: 'eq', value: '' },
  { title: 'Müşteri Cari', filter: 'contains', value: '' },
];

type LineColumn = { title: string; w?: number; value: string; right?: boolean; total?: string };

const lineColumns: LineColumn[] = [
  { title: 'ASD', w: 21, value: '262' },
  { title: 'S', w: 29, value: '1', right: true },
  { title: 'Stok No', w: 55, value: '141', right: true },
  { title: 'Stok Kodu', w: 94, value: '52.POLO.KANEPE' },
  { title: 'Stok Adı', w: 132, value: "MM-POLO 3'LÜ KANEPE" },
  { title: 'Varyant Adı', w: 90, value: 'PAREMETRELİ PO' },
  { title: 'Dinamik Stok', w: 90, value: '-- --' },
  { title: 'Açık XMiktar', w: 64, value: '1', right: true },
  { title: 'Miktar', w: 60, value: '1', right: true, total: '1,00' },
  { title: 'Birim', w: 34, value: 'Adet' },
  { title: 'Açık XMiktar1', w: 64, value: '1', right: true },
  { title: 'Miktar1', w: 64, value: '1', right: true, total: '1,00' },
  { title: 'Birim1', w: 43, value: 'Adet' },
  { title: 'Depo Miktar', w: 64, value: '' },
  { title: 'Depo', w: 30, value: 'Adet' },
  { title: 'Depo Miktar1', w: 68, value: '' },
  { title: 'Lot Kodu', value: 'METAL' },
];

const FilterMark = ({ kind }: { kind: OrderColumn['filter'] }) =>
  kind === 'eq' ? (
    <EqualSign />
  ) : (
    <ABC $mode={kind}><span>A</span><span>B</span><span>C</span></ABC>
  );

const OrdersPanel = () => (
  <GridPanel>
    <SearchField $marked>
      <BareInput aria-label="Ara" defaultValue="522" />
      <GlyphButton aria-label="Temizle"><Clear /></GlyphButton>
      <GlyphButton aria-label="Geçmiş"><Caret w={6} c="#3c6fae" /></GlyphButton>
      <GlyphButton aria-label="Bul"><Magnifier /></GlyphButton>
    </SearchField>
    <Table>
      <colgroup>
        <col width={12} />
        {orderColumns.map((c) => <col key={c.title} width={c.w} />)}
      </colgroup>
      <thead>
        <tr>
          <Head aria-label="Gösterge" />
          {orderColumns.map((c) => <Head key={c.title}>{c.title}</Head>)}
        </tr>
      </thead>
      <tbody>
        <tr>
          <FilterCell><Funnel /></FilterCell>
          {orderColumns.map((c) => (
            <FilterCell key={c.title}><FilterMark kind={c.filter} /></FilterCell>
          ))}
        </tr>
        <tr><BandCell colSpan={11} /></tr>
        <tr>
          <MarkerCell />
          {orderColumns.map((c, i) => (
            <Cell key={c.title} $tone={i ? 'light' : 'plain'} $right={!i}>
              {i ? c.value : <Hit>{c.value}</Hit>}
            </Cell>
          ))}
        </tr>
        <tr><EmptyCell colSpan={11} $h={64} /></tr>
      </tbody>
    </Table>
    <RecordBar thumb={51} />
    <Badge $x={-6} $y={73}>3</Badge>
  </GridPanel>
);

const LinesPanel = () => (
  <GridPanel>
    <SearchField>
      <BareInput aria-label="Ara" placeholder="Aramak için metin giriniz..." />
      <GlyphButton aria-label="Bul"><Magnifier /></GlyphButton>
    </SearchField>
    <Table>
      <colgroup>
        <col width={30} />
        {lineColumns.map((c) => <col key={c.title} width={c.w} />)}
      </colgroup>
      <thead>
        <tr>
          <Head><CheckSpot><CheckBox defaultChecked aria-label="Tümünü seç" /></CheckSpot></Head>
          {lineColumns.map((c) => (
            <Head key={c.title}>
              {c.title === 'S' ? (
                <SortLabel>
                  S
                  <svg width="9" height="5" viewBox="0 0 9 5" aria-hidden="true"><path d="M0 5h9L4.500 0z" fill="#8fc0f2" /></svg>
                </SortLabel>
              ) : (
                c.title
              )}
            </Head>
          ))}
        </tr>
      </thead>
      <tbody>
        <tr>
          <MarkerCell><CheckSpot $marked><CheckBox defaultChecked aria-label="Satırı seç" /></CheckSpot></MarkerCell>
          {lineColumns.map((c) => (
            <Cell key={c.title} $tone="strong" $right={c.right}>{c.value}</Cell>
          ))}
        </tr>
        <tr><EmptyCell colSpan={18} $h={39} /></tr>
      </tbody>
      <tfoot>
        <tr>
          <FootCell />
          {lineColumns.map((c) => (
            <FootCell key={c.title}>{c.total && <Total>{c.total}</Total>}</FootCell>
          ))}
        </tr>
      </tfoot>
    </Table>
    <RecordBar thumb={57} />
    <Badge $x={-13} $y={50}>4</Badge>
  </GridPanel>
);

const TextField = ({ id, label, icons, flat }: { id: string; label: string; icons: React.ReactNode[]; flat?: boolean }) => (
  <>
    <FieldLabel htmlFor={id}>{label}</FieldLabel>
    <Field $flat={flat}>
      <BareInput id={id} />
      {icons.map((icon, i) => (
        <GlyphButton key={i} aria-label={`${label} seç`}>{icon}</GlyphButton>
      ))}
    </Field>
  </>
);

const FiltersTab = () => (
  <TabPanel>
    <FieldColumns>
      <Fields $label={70} $input={220}>
        <TextField id="cari" label="Cari ünvanı" icons={[<People />]} />
        <TextField id="stokadi" label="Stok adı" icons={[<Barcode />]} />
        <TextField id="varyant" label="Stok varyantı" icons={[<TagIcon />]} />
        <TextField id="dinamik" label="Dinamik stok" icons={[<Barcode />]} />
      </Fields>
      <Fields $label={56} $input={200}>
        <TextField id="genel" label="Genel stok" icons={[<Barcode />]} />
        <TextField id="kalite" label="Kalite" icons={[<DoubleCheck />]} />
        <TextField id="lot" label="Lot" icons={[<TagIcon />]} />
        <TextField id="stokyeri" label="Stokyeri" icons={[<Barcode />]} />
      </Fields>
      <Fields $label={65} $input={200} $tight>
        <TextField id="mrp" label="MRP grubu" icons={[<TreeIcon />]} />
        <TextField id="proje" label="Proje" icons={[<LockIcon />, <PlusIcon />]} flat />
        <FieldLabel htmlFor="kodlar">İşlem kodları</FieldLabel>
        <Field>
          <CodeSelect id="kodlar">
            <option>ALISİP;ALSİFÜ;FASEVK;SATIŞ;POSSAT</option>
          </CodeSelect>
          <GlyphButton aria-label="Aç"><Caret w={6} c="#3c6fae" /></GlyphButton>
        </Field>
        <Checks>
          <CheckLabel><CheckBox />Kapanan ve kapatılmışları göster</CheckLabel>
          <CheckLabel><CheckBox />Sadece stokta bulunanı göster</CheckLabel>
        </Checks>
      </Fields>
    </FieldColumns>
    <ModeGroup>
      <ModeTitle>Görüntü modu</ModeTitle>
      <ModeList>
        <ModeLabel><Radio name="mod" defaultChecked />Detaylı liste</ModeLabel>
        <ModeLabel><Radio name="mod" />Düz liste</ModeLabel>
        <ModeLabel><Radio name="mod" />Terminli liste</ModeLabel>
      </ModeList>
    </ModeGroup>
    <LeadButton $w={105} $h={30}><Regenerate />Yenile</LeadButton>
  </TabPanel>
);

const SelectDialog = () => (
  <Dialog role="dialog" aria-label="Bekleyen Alış Satış İşlemi Seç">
    <DialogTitle>
      <Butterfly />
      <DialogTitleText>Bekleyen Alış Satış İşlemi Seç</DialogTitleText>
      <CaptionButton aria-label="Küçült">
        <svg width="10" height="1" viewBox="0 0 10 1" aria-hidden="true"><path d="M0 .5h10" stroke="#000" /></svg>
      </CaptionButton>
      <CaptionButton aria-label="Büyüt">
        <svg width="10" height="10" viewBox="0 0 10 10" fill="none" aria-hidden="true"><path d="M.5.500h9v9h-9z" stroke="#000" /></svg>
      </CaptionButton>
      <CaptionButton aria-label="Kapat">
        <svg width="10" height="10" viewBox="0 0 10 10" fill="none" aria-hidden="true"><path d="m0 0 10 10M10 0 0 10" stroke="#000" strokeWidth="1.200" /></svg>
      </CaptionButton>
    </DialogTitle>
    <OrdersPanel />
    <Splitter><Caret w={6} c="#5a92d8" /></Splitter>
    <LinesPanel />
    <Splitter $wide><Caret w={6} c="#5a92d8" /></Splitter>
    <Tabs role="tablist">
      <Tab role="tab" aria-selected $active>Filtreler</Tab>
      <Tab role="tab">Termin Ayrıntıları</Tab>
    </Tabs>
    <FiltersTab />
    <DialogFooter>
      <PushButton $w={38} $h={34} aria-label="Düzenle"><PageEdit /></PushButton>
      <Gap />
      <LeadButton $w={193} $h={34}><RedCheck />Stokta Bulunan Miktarı Al</LeadButton>
      <PushButton $w={105} $h={34} $default>
        <Badge $x={-10} $y={6}>5</Badge>
        <GreenCheck /><span><u>T</u>amam</span>
      </PushButton>
      <Gap $w={12} />
      <PushButton $w={105} $h={34}><RedCross /><span><u>V</u>azgeç</span></PushButton>
    </DialogFooter>
  </Dialog>
);

const MainToolbar = () => (
  <Toolbar>
    <ToolGroup><ToolButton aria-label="Yeni"><PageAdd /></ToolButton></ToolGroup>
    <ToolGroup><ToolButton aria-label="Sil"><PageRemove /></ToolButton></ToolGroup>
    <ToolGroup>
      <ToolButton aria-label="İlk"><First /></ToolButton>
      <ToolButton aria-label="Önceki"><Prev /></ToolButton>
      <ToolButton aria-label="Sonraki"><Prev flip /></ToolButton>
      <ToolButton aria-label="Son"><First flip /></ToolButton>
      <ToolButton aria-label="Tazele"><Reload /></ToolButton>
    </ToolGroup>
    <ToolGroup><ToolButton $disabled aria-label="Kaydet"><SaveCheck /></ToolButton></ToolGroup>
    <ToolGroup><ToolButton $disabled aria-label="Vazgeç"><SaveCancel /></ToolButton></ToolGroup>
    <ToolGroup>
      <ToolButton $w={60} $split aria-label="Yazdır"><Printer /><Caret /></ToolButton>
      <ToolButton $w={60} $split aria-label="PDF kaydet"><PdfSave /><Caret /></ToolButton>
      <ToolButton $w={60} $split aria-label="Aktar"><PageTransfer /><Caret /></ToolButton>
      <ToolButton aria-label="İçe al"><PageImport /></ToolButton>
      <ToolButton aria-label="Ayarlar"><PageTools /></ToolButton>
    </ToolGroup>
    <ToolGroup>
      <ToolButton $w={44}><Mark>M</Mark></ToolButton>
      <ToolButton $w={16} aria-label="Seçenekler"><Caret w={6} c="#3c86c8" /></ToolButton>
    </ToolGroup>
    <ToolButton $w={80} $split aria-label="Çıkış"><ExitDoor /><Caret /></ToolButton>
    <ToolSpacer />
    <Summary>
      <SummaryTitle>Hızlı Üretim Siparişi</SummaryTitle>
      <SummaryRow>
        <SummaryCell $bg="#fffaef">527</SummaryCell>
        <SummaryCell $bg="#00ffff">Giriş</SummaryCell>
      </SummaryRow>
    </Summary>
    <ToolButton aria-label="Yardım"><Help /></ToolButton>
  </Toolbar>
);

export default function App() {
  return (
    <>
      <GlobalStyle />
      <Gradients />
      <Screen>
        <Frame>
          <FrameTitle>
            <Butterfly />
            <FrameTitleText>Hızlı Üretim Siparişi</FrameTitleText>
            <FrameButtons>
              <FrameButton aria-label="Simge durumuna küçült">
                <svg width="12" height="6" viewBox="0 0 12 6" aria-hidden="true"><rect x="1" y="1" width="10" height="4" rx="1" fill="#f4f6f8" stroke="#59636f" /></svg>
              </FrameButton>
              <FrameButton aria-label="Ekranı kapla">
                <svg width="12" height="10" viewBox="0 0 12 10" aria-hidden="true">
                  <rect x="1" y="1" width="10" height="8" rx="1" fill="#f4f6f8" stroke="#59636f" />
                  <rect x="4" y="4" width="4" height="2" fill="#c3cfdc" stroke="#59636f" />
                </svg>
              </FrameButton>
              <FrameButton aria-label="Kapat">
                <svg width="12" height="10" viewBox="0 0 12 10" fill="none" aria-hidden="true">
                  <path d="m2 1 8 8M10 1 2 9" stroke="#59636f" strokeWidth="3.500" />
                  <path d="m2.500 1.500 7 7M9.500 1.500l-7 7" stroke="#f4f6f8" strokeWidth="1.500" />
                </svg>
              </FrameButton>
            </FrameButtons>
          </FrameTitle>
          <Client>
            <MainToolbar />
            <ProfileBox>
              <ProfileLabel $w={33} htmlFor="profil">Profil</ProfileLabel>
              <ProfileField $w={238}>
                <BareInput id="profil" defaultValue="HIZLI ÜRETİM SİPARİŞ PROFİLİ" />
                <GlyphButton aria-label="Profil seç"><Factory dark="#a01c12" light="#b08a2a" /></GlyphButton>
              </ProfileField>
              <ProfileLabel $w={52} htmlFor="aciklama">Açıklama</ProfileLabel>
              <ProfileField $w={300} $partial>
                <BareInput id="aciklama" defaultValue="522 nolu siparişin üretimi" />
              </ProfileField>
              <Badge $x={451} $y={10}>1</Badge>
            </ProfileBox>
            <Workspace>
              <Sidebar>
                <SidebarTitle>İşlemler</SidebarTitle>
                <ActionList>
                  <ActionItem $ruled><ActionButton $marked><FolderOpen />Alınan Siparişten Seç</ActionButton></ActionItem>
                  <ActionItem $ruled><ActionButton $muted><Factory dark="#858585" light="#a3a3a3" />Gerçekleşen Gir</ActionButton></ActionItem>
                  <ActionItem $ruled><ActionButton><Calculator />Hesapla</ActionButton></ActionItem>
                  <ActionItem><ActionButton><BendArrow />Hepsini Genişlet</ActionButton></ActionItem>
                  <ActionItem><ActionButton><BendArrow flip />Hepsini Daralt</ActionButton></ActionItem>
                </ActionList>
                <Badge $x={136} $y={36}>2</Badge>
              </Sidebar>
              <SideSplitter><SideArrow c="#5a92d8" /></SideSplitter>
              <RightPane>
                <BackGrid>
                  <BackHeader><BackHeaderCell>Gerçekleşen%</BackHeaderCell></BackHeader>
                  <BackScroll><SideArrow flip c="#93a3cc" /></BackScroll>
                </BackGrid>
                <BackRule />
                <BackGroup>
                  <BackGroupTitle />
                  <BackList><BackScroll><SideArrow flip c="#93a3cc" /></BackScroll></BackList>
                  <BackFooter />
                </BackGroup>
              </RightPane>
            </Workspace>
          </Client>
          <SelectDialog />
        </Frame>
      </Screen>
    </>
  );
}
